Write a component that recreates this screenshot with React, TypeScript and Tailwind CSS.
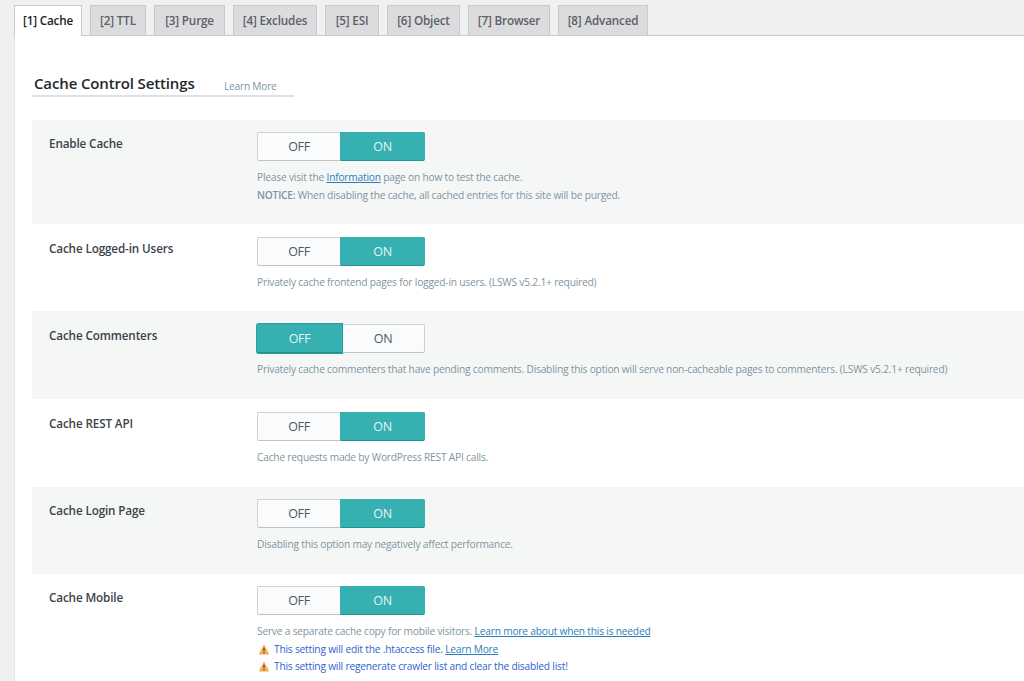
import React from 'react';
import clsx from 'clsx';

interface Tab {
  label: string;
  width: string;
}

interface Setting {
  title: string;
  layout: string;
  value: 'ON' | 'OFF';
  focused?: boolean;
  description: React.ReactNode;
}

const tabs: Tab[] = [
  { label: '[1] Cache', width: 'w-[68px]' },
  { label: '[2] TTL', width: 'w-[56px]' },
  { label: '[3] Purge', width: 'w-[71px]' },
  { label: '[4] Excludes', width: 'w-[84px]' },
  { label: '[5] ESI', width: 'w-[54px]' },
  { label: '[6] Object', width: 'w-[73px]' },
  { label: '[7] Browser', width: 'w-[82px]' },
  { label: '[8] Advanced', width: 'w-[90px]' },
];

const Link: React.FC<{ children: React.ReactNode }> = ({ children }) => (
  <a href="#" className="text-[#2b7fb9] underline">
    {children}
  </a>
);

const WarningIcon = () => (
  <svg width="12" height="11" viewBox="0 0 12 11" className="mr-1 ml-px shrink-0">
    <path d="M6 0.8 L11 10.2 H1 Z" fill="#f5ac4e" stroke="#f8c27c" strokeWidth="0.8" strokeLinejoin="round" />
    <path d="M6 3.8 V7" stroke="#5a4c40" strokeWidth="1.4" />
    <path d="M6 7.9 V9.2" stroke="#5a4c40" strokeWidth="1.4" />
  </svg>
);

const Warning: React.FC<{ children: React.ReactNode }> = ({ children }) => (
  <div className="flex items-center text-[#2f62cf]">
    <WarningIcon />
    <span>{children}</span>
  </div>
);

const settings: Setting[] = [
  {
    title: 'Enable Cache',
    layout: 'h-[104px] pt-[12px]',
    value: 'ON',
    description: (
      <>
        <div>
          Please visit the <Link>Information</Link> page on how to test the cache.
        </div>
        <div>
          <span className="font-semibold">NOTICE:</span> When disabling the cache, all cached entries for this site will be purged.
        </div>
      </>
    ),
  },
  {
    title: 'Cache Logged-in Users',
    layout: 'h-[87px] pt-[13px]',
    value: 'ON',
    description: 'Privately cache frontend pages for logged-in users. (LSWS v5.2.1+ required)',
  },
  {
    title: 'Cache Commenters',
    layout: 'h-[88px] pt-[13px]',
    value: 'OFF',
    focused: true,
    description:
      'Privately cache commenters that have pending comments. Disabling this option will serve non-cacheable pages to commenters. (LSWS v5.2.1+ required)',
  },
  {
    title: 'Cache REST API',
    layout: 'h-[88px] pt-[13px]',
    value: 'ON',
    description: 'Cache requests made by WordPress REST API calls.',
  },
  {
    title: 'Cache Login Page',
    layout: 'h-[87px] pt-[12px]',
    value: 'ON',
    description: 'Disabling this option may negatively affect performance.',
  },
  {
    title: 'Cache Mobile',
    layout: 'h-[107px] pt-[12px]',
    value: 'ON',
    description: (
      <>
        <div>
          Serve a separate cache copy for mobile visitors. <Link>Learn more about when this is needed</Link>
        </div>
        <Warning>
          This setting will edit the .htaccess file. <Link>Learn More</Link>
        </Warning>
        <Warning>This setting will regenerate crawler list and clear the disabled list!</Warning>
      </>
    ),
  },
];

const Toggle: React.FC<{ value: 'ON' | 'OFF'; focused?: boolean }> = ({ value, focused }) => (
  <div className="flex h-[29px] w-[168px] text-[12.5px] tracking-[-0.3px]">
    {(['OFF', 'ON'] as const).map((option) => (
      <button
        key={option}
        className={clsx(
          'flex items-center justify-center border pt-px',
          option === 'OFF' ? 'rounded-l-[2px]' : 'rounded-r-[2px]',
          (option === 'OFF') === !!focused ? 'w-[85px]' : 'w-[83px]',
          option === value
            ? 'border-[#36b0b0] border-b-[#1f9292] bg-[#36b0b0] text-[#e4f5f5]'
            : 'border-[#cfd1d2] border-b-[#c0c2c3] bg-[#fafbfd] text-[#50575e]',
          option !== value && (option === 'OFF' ? 'border-r-0' : 'border-l-0'),
          option === value && focused && 'z-10 border-[#2a9a9a] ring-1 ring-[#2a9a9a]'
        )}
      >
        {option}
      </button>
    ))}
  </div>
);

const App: React.FC = () => {
  return (
    <div className="h-[681px] overflow-hidden bg-[#eff0f0] font-['Open_Sans','Noto_Sans',sans-serif] text-[#3c434a]">
      <nav className="ml-[14px] flex h-[36px] items-end gap-2 border-b border-[#c8cacc] pt-[5px]">
        {tabs.map((tab, i) => (
          <button
            key={tab.label}
            className={clsx(
              'flex shrink-0 items-center justify-center border border-[#c8cacc] text-[11.7px] font-semibold tracking-[-0.17px] whitespace-nowrap',
              tab.width,
              i === 0 ? 'relative top-px h-[31px] border-b-0 bg-white text-[#1d2327]' : 'h-[30px] border-b-0 bg-[#dcdcde] text-[#5b6168]'
            )}
          >
            {tab.label}
          </button>
        ))}
      </nav>

      <main className="ml-[14px] h-[645px] border-l border-[#e3e4e5] bg-white pt-[36px] pl-[17px]">
        <div className="mb-[23px] flex h-[25px] w-[262px] items-center border-b-2 border-[#dfe1e2] pl-[2px]">
          <h1 className="w-[190px] text-[15px] font-semibold tracking-[-0.14px] text-[#23282d]">Cache Control Settings</h1>
          <a href="#" className="pt-[6px] text-[10.2px] tracking-[-0.24px] text-[#7c96a5]">
            Learn More
          </a>
        </div>

        {settings.map((setting, i) => (
          <section key={setting.title} className={clsx('flex pl-[17px]', setting.layout, i % 2 === 0 ? 'bg-[#f5f7f7]' : 'bg-white')}>
            <h2 className="w-[208px] shrink-0 pt-[2px] text-[11.7px] leading-[18px] font-semibold tracking-[-0.13px]">{setting.title}</h2>
            <div>
              <Toggle value={setting.value} focused={setting.focused} />
              <div className="mt-[8px] text-[10.2px] leading-[17.5px] tracking-[-0.2px] whitespace-nowrap text-[#7f94a1]">
                {setting.description}
              </div>
            </div>
          </section>
        ))}
      </main>
    </div>
  );
};

export default App;
